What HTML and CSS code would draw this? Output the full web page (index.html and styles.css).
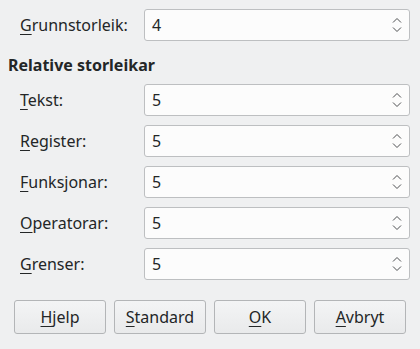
FILE: index.html
```html
<!DOCTYPE html>
<html lang="nn">
<head>
    <meta charset="UTF-8">
    <title>Skriftstorleikar</title>
    <link rel="stylesheet" href="styles.css">
</head>
<body>
    <div class="dialog">
        <div class="field">
            <label for="base"><u>G</u>runnstorleik:</label>
            <div class="spin"><span id="base">4</span>
                <svg class="arrows" width="12" height="18" viewBox="0 0 12 18"><path d="M2 6.5 L6 2.5 L10 6.5 M2 11.5 L6 15.5 L10 11.5" fill="none" stroke="#4d4f51" stroke-width="1"/></svg>
            </div>
        </div>

        <h2>Relative storleikar</h2>

        <div class="group">
            <div class="field">
                <label><u>T</u>ekst:</label>
                <div class="spin"><span>5</span>
                    <svg class="arrows" width="12" height="18" viewBox="0 0 12 18"><path d="M2 6.5 L6 2.5 L10 6.5 M2 11.5 L6 15.5 L10 11.5" fill="none" stroke="#4d4f51" stroke-width="1"/></svg>
                </div>
            </div>
            <div class="field">
                <label><u>R</u>egister:</label>
                <div class="spin"><span>5</span>
                    <svg class="arrows" width="12" height="18" viewBox="0 0 12 18"><path d="M2 6.5 L6 2.5 L10 6.5 M2 11.5 L6 15.5 L10 11.5" fill="none" stroke="#4d4f51" stroke-width="1"/></svg>
                </div>
            </div>
            <div class="field">
                <label><u>F</u>unksjonar:</label>
                <div class="spin"><span>5</span>
                    <svg class="arrows" width="12" height="18" viewBox="0 0 12 18"><path d="M2 6.5 L6 2.5 L10 6.5 M2 11.5 L6 15.5 L10 11.5" fill="none" stroke="#4d4f51" stroke-width="1"/></svg>
                </div>
            </div>
            <div class="field">
                <label><u>O</u>peratorar:</label>
                <div class="spin"><span>5</span>
                    <svg class="arrows" width="12" height="18" viewBox="0 0 12 18"><path d="M2 6.5 L6 2.5 L10 6.5 M2 11.5 L6 15.5 L10 11.5" fill="none" stroke="#4d4f51" stroke-width="1"/></svg>
                </div>
            </div>
            <div class="field">
                <label><u>G</u>renser:</label>
                <div class="spin"><span>5</span>
                    <svg class="arrows" width="12" height="18" viewBox="0 0 12 18"><path d="M2 6.5 L6 2.5 L10 6.5 M2 11.5 L6 15.5 L10 11.5" fill="none" stroke="#4d4f51" stroke-width="1"/></svg>
                </div>
            </div>
        </div>

        <div class="buttons">
            <button><u>H</u>jelp</button>
            <button><u>S</u>tandard</button>
            <button><u>O</u>K</button>
            <button><u>A</u>vbryt</button>
        </div>
    </div>
</body>
</html>
```

FILE: styles.css
```css
body {
    margin: 0;
    background-color: #eff0f1;
    font-family: 'Noto Sans', sans-serif;
    font-size: 16px;
    color: #232627;
}
.dialog {
    padding: 9px 10px 0 8px;
}
.field {
    display: grid;
    grid-template-columns: 124px 1fr;
    align-items: center;
    padding-left: 12px;
}
.group {
    display: flex;
    flex-direction: column;
    gap: 9px;
}
u {
    text-decoration-thickness: 1px;
    text-underline-offset: 3px;
}
.spin {
    height: 32px;
    box-sizing: border-box;
    border: 1px solid #bdbfc1;
    border-radius: 3px;
    background-color: #fcfcfc;
    display: flex;
    align-items: center;
    justify-content: space-between;
    padding: 0 6px 0 7px;
}
.arrows {
    display: block;
}
h2 {
    font-size: 16px;
    font-weight: bold;
    line-height: 20px;
    margin: 14px 0 9px 0;
}
.buttons {
    display: grid;
    grid-template-columns: repeat(4, 92px);
    gap: 8px;
    padding-left: 6px;
    margin-top: 20px;
}
button {
    height: 34px;
    font-family: 'Noto Sans', sans-serif;
    font-size: 16px;
    color: #232627;
    background: linear-gradient(#f3f4f5, #e9eaeb);
    border: 1px solid #b3b5b7;
    border-radius: 3px;
    padding: 0;
}
```
